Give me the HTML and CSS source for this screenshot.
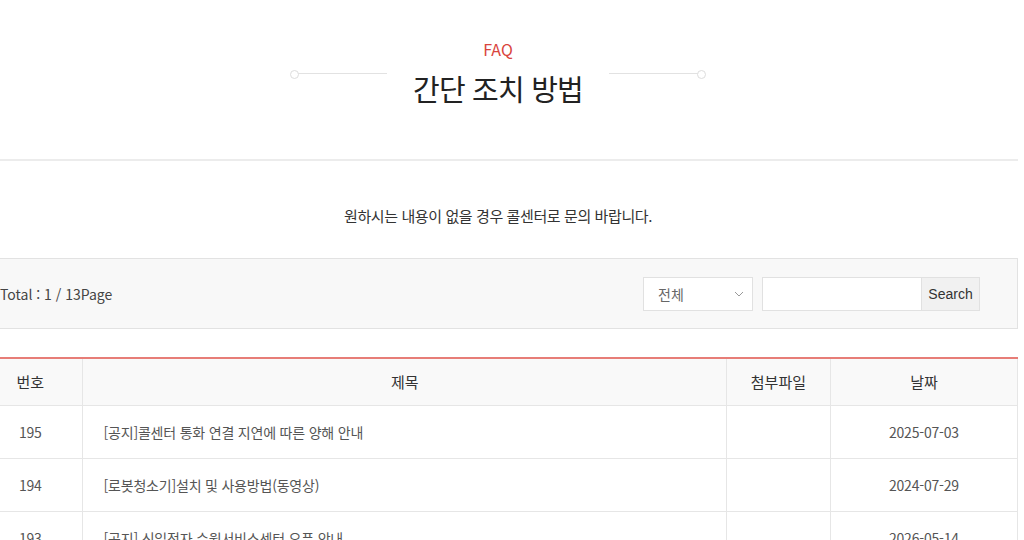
FILE: index.html
```html
<!DOCTYPE html>
<html lang="ko">
<head>
    <meta charset="UTF-8">
    <meta name="viewport" content="width=device-width, initial-scale=1.0">
    <title>FAQ - 간단 조치 방법</title>
    <link rel="stylesheet" href="styles.css">
</head>
<body>

    <!-- PAGE TITLE -->
    <section class="faq-head">
        <p class="faq-sub">FAQ</p>
        <div class="faq-title-row">
            <span class="deco-line deco-left"></span>
            <h2 class="faq-title">간단 조치 방법</h2>
            <span class="deco-line deco-right"></span>
        </div>
    </section>

    <div class="container">

        <p class="faq-notice">원하시는 내용이 없을 경우 콜센터로 문의 바랍니다.</p>

        <!-- SEARCH BAR -->
        <div class="filter-box">
            <p class="total">Total : 1 / 13Page</p>
            <form class="search-form" onsubmit="return false">
                <div class="select-box">
                    <span>전체</span>
                    <svg width="10" height="6" viewBox="0 0 10 6"><path d="M1 1l4 4 4-4" fill="none" stroke="#999" stroke-width="1"/></svg>
                </div>
                <input type="text" class="search-input">
                <button type="submit" class="search-btn">Search</button>
            </form>
        </div>

        <!-- LIST -->
        <table class="board">
            <colgroup>
                <col class="col-num">
                <col class="col-title">
                <col class="col-file">
                <col class="col-date">
            </colgroup>
            <thead>
                <tr>
                    <th>번호</th>
                    <th>제목</th>
                    <th>첨부파일</th>
                    <th>날짜</th>
                </tr>
            </thead>
            <tbody>
                <tr>
                    <td>195</td>
                    <td class="subject">[공지]콜센터 통화 연결 지연에 따른 양해 안내</td>
                    <td></td>
                    <td>2025-07-03</td>
                </tr>
                <tr>
                    <td>194</td>
                    <td class="subject">[로봇청소기]설치 및 사용방법(동영상)</td>
                    <td></td>
                    <td>2024-07-29</td>
                </tr>
                <tr>
                    <td>193</td>
                    <td class="subject">[공지] 신일전자 수원서비스센터 오픈 안내</td>
                    <td></td>
                    <td>2026-05-14</td>
                </tr>
            </tbody>
        </table>
    </div>

</body>
</html>
```

FILE: styles.css
```css
/* BASE */
* {
    margin: 0;
    padding: 0;
    box-sizing: border-box;
    font-family: "Noto Sans CJK KR", "Noto Sans", sans-serif;
}

body {
    background-color: #ffffff;
    color: #333333;
    overflow: hidden;
}

/* PAGE TITLE */
.faq-head {
    width: 1040px;
    margin-left: -22px;
    padding: 38px 0 51px;
    text-align: center;
    border-bottom: 2px solid #ececec;
}

.faq-sub {
    font-size: 16px;
    line-height: 22px;
    color: #d9443d;
}

.faq-title-row {
    display: flex;
    justify-content: center;
    align-items: flex-start;
    gap: 26px;
    margin-top: 8px;
}

.faq-title {
    font-size: 29px;
    font-weight: 400;
    line-height: 40px;
    color: #222222;
    letter-spacing: -0.8px;
}

/* decorative lines beside title */
.deco-line {
    position: relative;
    width: 93px;
    height: 1px;
    margin-top: 5px;
    background-color: #e2e2e2;
}

.deco-line::before {
    content: "";
    position: absolute;
    top: -3px;
    width: 7px;
    height: 7px;
    border: 1px solid #dddddd;
    border-radius: 50%;
    background-color: #ffffff;
}

.deco-left::before {
    left: -4px;
}

.deco-right::before {
    right: -4px;
}

/* CONTENT */
.container {
    width: 1040px;
    margin-left: -22px;
}

.faq-notice {
    margin: 43px 0 30px;
    text-align: center;
    font-size: 15px;
    line-height: 24px;
    color: #333333;
    letter-spacing: -0.4px;
}

/* SEARCH BAR */
.filter-box {
    display: flex;
    justify-content: space-between;
    align-items: center;
    height: 71px;
    padding: 0 37px 0 21px;
    background-color: #f8f8f8;
    border: 1px solid #e2e2e2;
}

.total {
    font-size: 14px;
    color: #444444;
}

.search-form {
    display: flex;
    align-items: center;
}

.select-box {
    display: flex;
    justify-content: space-between;
    align-items: center;
    width: 110px;
    height: 34px;
    padding: 0 8px 0 14px;
    background-color: #ffffff;
    border: 1px solid #e1e1e1;
    font-size: 14px;
    color: #666666;
    margin-right: 9px;
}

.search-input {
    width: 159px;
    height: 34px;
    border: 1px solid #e1e1e1;
    border-right: none;
    background-color: #ffffff;
    outline: none;
}

.search-btn {
    width: 59px;
    height: 34px;
    border: 1px solid #e1e1e1;
    background-color: #f1f1f1;
    font-family: "Liberation Sans", Arial, sans-serif;
    font-size: 14px;
    color: #333333;
    cursor: pointer;
}

/* LIST TABLE */
.board {
    width: 100%;
    margin-top: 28px;
    border-collapse: collapse;
    table-layout: fixed;
    border-top: 2px solid #e77d77;
    border-right: 1px solid #e6e6e6;
}

.col-num { width: 10.1%; }
.col-title { width: 61.9%; }
.col-file { width: 10%; }
.col-date { width: 18%; }

.board th {
    height: 47px;
    background-color: #f9f9f9;
    font-size: 15px;
    font-weight: 400;
    color: #333333;
    border-left: 1px solid #e6e6e6;
    border-bottom: 1px solid #e6e6e6;
}

.board td {
    height: 53px;
    text-align: center;
    font-size: 14px;
    letter-spacing: -0.2px;
    color: #555555;
    border-left: 1px solid #e6e6e6;
    border-bottom: 1px solid #e6e6e6;
}

.board th:first-child,
.board td:first-child {
    border-left: none;
}

.board td.subject {
    text-align: left;
    padding-left: 20px;
}
```
